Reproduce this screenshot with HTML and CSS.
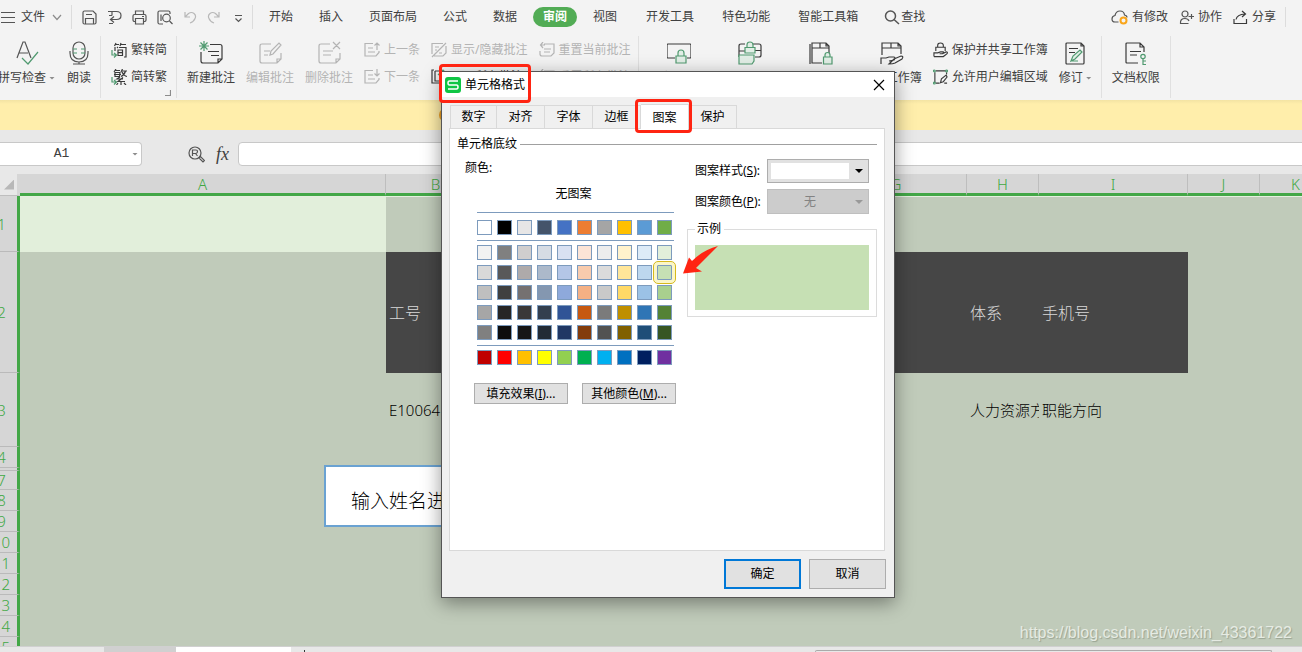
FILE: index.html
```html
<!DOCTYPE html>
<html lang="zh-CN">
<head>
<meta charset="utf-8">
<title>单元格格式</title>
<link rel="stylesheet" href="styles.css">
</head>
<body>
<div class="app">
  <header class="menubar">
    <div class="file-menu">
      <svg class="ico" width="16" height="16" viewBox="0 0 16 16"><path d="M1 3.500h14M1 8.500h14M1 13.500h14"/></svg>
      <button class="plain">文件</button>
      <svg class="ico pale" width="10" height="16" viewBox="0 0 10 16"><path d="M1 6l4 4.500 4-4.500"/></svg>
    </div>
    <div class="quick">
      <button class="plain" aria-label="保存"><svg class="ico" width="15" height="15" viewBox="0 0 15 15"><path d="M2.500 1h8.500l3 3v8.500q0 1.500-1.500 1.500h-10q-1.500 0-1.500-1.500v-10q0-1.500 1.500-1.500zM4 4.500h6M3.500 14V8.500h8V14"/></svg></button>
      <button class="plain" aria-label="输出"><svg class="ico" width="15" height="15" viewBox="0 0 15 15"><path d="M1 1.500h8.500q4.500 0 4.500 4t-4.500 4H4M5 1.500v4M2 5.500h3M7 6.500l-3.500 3 3.500 3M6 13.500H2"/></svg></button>
      <button class="plain" aria-label="打印"><svg class="ico" width="15" height="15" viewBox="0 0 15 15"><path d="M3.500 4.500V1h8v3.500M3.500 11.500H2q-1-.5-1-1.500V6q0-1.500 1.500-1.500h10Q14 4.500 14 6v4q0 1-1 1.500h-1.500M3.500 8.500h8V14h-8zM10 6.500h2"/></svg></button>
      <button class="plain" aria-label="打印预览"><svg class="ico" width="16" height="15" viewBox="0 0 16 15"><path d="M6 14H2.500Q1 14 1 12.500v-10Q1 1 2.500 1h9Q13 1 13 2.500V4M4 11V4.500M12.500 11l3 3"/><circle cx="9.500" cy="8" r="3.800"/></svg></button>
      <button class="plain" aria-label="撤销"><svg class="ico faint" width="14" height="15" viewBox="0 0 14 15"><path d="M2 2v5h5M2 7l3.500-3.500q3-2 5.500 0t1 5q-1 3-5 4.500"/></svg></button>
      <button class="plain" aria-label="恢复"><svg class="ico faint" width="14" height="15" viewBox="0 0 14 15"><path d="M12 2v5H7M12 7L8.500 3.500q-3-2-5.500 0t-1 5q1 3 5 4.500"/></svg></button>
      <button class="plain more" aria-label="更多"><svg class="ico" width="9" height="15" viewBox="0 0 9 15"><path d="M1 5.500h7M1.500 8.500l3 3 3-3"/></svg></button>
    </div>
    <nav class="tabs">
      <button class="plain">开始</button><button class="plain">插入</button><button class="plain">页面布局</button><button class="plain">公式</button><button class="plain">数据</button><button class="pill">审阅</button><button class="plain">视图</button>
    </nav>
    <nav class="tabs extra">
      <button class="plain">开发工具</button><button class="plain">特色功能</button><button class="plain">智能工具箱</button>
    </nav>
    <button class="plain find"><svg class="ico bold" width="16" height="16" viewBox="0 0 16 16"><circle cx="6.500" cy="7" r="5"/><path d="M10 10.500l5 4.500"/></svg>查找</button>
    <div class="account">
      <button class="plain"><svg class="ico" width="17" height="15" viewBox="0 0 17 15"><path d="M7.500 12H4Q1 12 1 9t3-3.500Q5 1 9 1t4.500 4Q16 5.500 16 7.500"/><circle class="orange" cx="12.500" cy="10.500" r="3"/></svg>有修改</button>
      <button class="plain"><svg class="ico" width="15" height="15" viewBox="0 0 15 15"><circle cx="6" cy="4" r="3"/><path d="M9.500 13.500H1.500Q1 8.500 6 8.500q3 0 4 2.500M9.500 6.500H15M12.500 4v5"/></svg>协作</button>
      <button class="plain"><svg class="ico dark" width="15" height="15" viewBox="0 0 15 15"><path d="M1 9v4.500h12.500V9M3 9.500Q4 4.500 12 4M9 1l3.500 3L9 7"/></svg>分享</button>
    </div>
  </header>

  <section class="ribbon">
    <div class="group first">
      <button class="big"><svg class="ico" width="24" height="24" viewBox="0 0 24 24"><path d="M2 17L8 1h2l6 16M4 12h9"/><path class="green" d="M7 17l6 6L23 11"/></svg><span class="drop">拼写检查</span></button>
      <button class="big"><svg class="ico" width="22" height="24" viewBox="0 0 22 24"><rect x="5" y="1" width="12" height="17" rx="6"/><path d="M2 10v2q0 9 9 9t9-9v-2M11 21v2M5 23h12"/><path class="green" d="M5 8h4M5 12h4M13 8h4M13 12h4"/></svg><span>朗读</span></button>
    </div>
    <div class="group convert">
      <div class="stack">
        <button class="small"><svg class="ico dark" width="16" height="16" viewBox="0 0 16 16"><path d="M5 1L3.500 4M4 2.500h4M10 1L9 4M9.500 2.500H15M4 5v4M6 5l1 1M8 5.500h7V15h-2M7 8h4.500v5.500H7zM7 10.700h4.500"/><path class="green" d="M1 8v5h4M3 11l2.500 2L3 15.500"/></svg>繁转简</button>
        <button class="small"><svg class="ico dark" width="16" height="16" viewBox="0 0 16 16"><path d="M5 0L3 3M4 1.500h5M4 3.500h5l-.5 4H4zM3 5.500h7M11.500 0L10 3M11 2h5M14.500 2q-1 4-4.500 5.500M11 3q2 4 5 4.500M9 8L6 10h6M12 8.500L7 12.500h7M10 12.500V16M7 14l-1.500 2M13 14l2 2"/><path class="green" d="M1 8v5h4M3 11l2.500 2L3 15.500"/></svg>简转繁</button>
      </div>
      <svg class="ico pale launcher" width="6" height="6" viewBox="0 0 6 6"><path d="M5.500 0v5.500H0"/></svg>
    </div>
    <div class="group comments">
      <button class="big"><svg class="ico dark" width="24" height="24" viewBox="0 0 24 24"><path d="M11 3.500h10q2 0 2 2V18l-4 4H4q-2 0-2-2v-9M23 18h-4v4M9 10.500h11M12 14.500h8"/><path class="green" d="M5 0v10M0 5h10M1.500 1.500l7 7M8.500 1.500l-7 7"/></svg><span>新建批注</span></button>
      <button class="big off" disabled><svg class="ico" width="24" height="24" viewBox="0 0 24 24"><path d="M13 3H4Q2 3 2 5v15q0 2 2 2h15l4-4V12M23 18h-4v4M6 10h6M6 14h4M12 14l1-4 8-8 2 2-8 9z"/></svg><span>编辑批注</span></button>
      <button class="big off" disabled><svg class="ico" width="24" height="24" viewBox="0 0 24 24"><path d="M13 3H4Q2 3 2 5v15q0 2 2 2h15l4-4V12M23 18h-4v4M6 10h10M6 14h8M16 1l7 7M23 1l-7 7"/></svg><span>删除批注</span></button>
      <div class="stack">
        <button class="small off" disabled><svg class="ico" width="16" height="16" viewBox="0 0 16 16"><path d="M9 1.500H1V14h11l3-3.500V9M4 6h5M4 10h7M13 8V1M10.500 3.500L13 1l2.500 2.500"/></svg>上一条</button>
        <button class="small off" disabled><svg class="ico" width="16" height="16" viewBox="0 0 16 16"><path d="M9 1.500H1V14h11l3-3.500V9M4 6h5M4 10h7M13 0v7M10.500 4.500L13 7l2.500-2.500"/></svg>下一条</button>
      </div>
      <div class="stack">
        <button class="small off" disabled><svg class="ico" width="16" height="16" viewBox="0 0 16 16"><path d="M12 1.500H1V12M3 14h9l3-3V4M15 1L1 15M4 5h4M4 8h2M8 11h3"/></svg>显示/隐藏批注</button>
        <button class="small"><svg class="ico dark" width="16" height="16" viewBox="0 0 16 16"><path d="M3 1H1v13h11M4 2h4M4 2v10h11V5"/><path class="green" d="M7 6l5-5 4 4"/></svg>显示所有批注</button>
      </div>
      <div class="stack">
        <button class="small off" disabled><svg class="ico" width="16" height="16" viewBox="0 0 16 16"><path d="M5 2h10v9l-3 3H3q-2 0-2-2V9M4 0L1.500 3 4 6M1.500 3H6M5 7h7M5 10h6"/></svg>重置当前批注</button>
        <button class="small off" disabled><svg class="ico" width="16" height="16" viewBox="0 0 16 16"><path d="M5 2h10v9l-3 3H3q-2 0-2-2V9M4 0L1.500 3 4 6M1.500 3H6M5 7h7M5 10h6"/></svg>重置所有批注</button>
      </div>
    </div>
    <div class="group protect">
      <button class="big"><svg class="ico dark" width="24" height="24" viewBox="0 0 24 24"><path d="M8 17H1q-1 0-1-1V4q0-1 1-1h22q1 0 1 1v12q0 1-1 1h-3"/><path class="green fill" d="M9 15h10v7H9zM11 15v-3q0-3 3-3t3 3v3"/></svg><span>锁定单元格</span></button>
      <button class="big"><svg class="ico dark" width="24" height="24" viewBox="0 0 24 24"><path d="M7 3H3Q1 3 1 5v11M1 10h6M12 3h9q2 0 2 2v9q0 2-2 2h-4M17 9.500h6"/><path class="green fill" d="M7 6.500h10V12H7zM9 6.500V4q0-3 3-3t3 3v2.500M1 14h15v6l-2 3H1z"/></svg><span>保护工作表</span></button>
      <button class="big"><svg class="ico dark" width="24" height="24" viewBox="0 0 24 24"><path d="M1 3v20M13 22H3V2h14l3 3v7M3 7h17M11 2v5M17 2v3h3"/><path class="green fill" d="M14.500 16H23v7h-8.500zM16 16v-2q0-2.500 2.500-2.500T21 14v2"/></svg><span>保护工作簿</span></button>
      <button class="big"><svg class="ico dark" width="24" height="24" viewBox="0 0 24 24"><path d="M2 14V2h16l3 3v8M2 7h19M11 2v5M18 2v3h3M1 23v-6h5l3-1h5q2 1 0 3l-5 1M14 18l7-3q3 0 1 3l-7 4q-2 1-6 1z"/></svg><span>共享工作簿</span></button>
      <div class="stack">
        <button class="small"><svg class="ico dark" width="15" height="16" viewBox="0 0 16 16"><path d="M3 9V5h10v4M5 5V3q0-2.500 3-2.500T11 3v2M1 15v-4h4l3-1h3q1 1-1 2H7M10 12l4-2q2 0 1 2l-4 3H1"/></svg>保护并共享工作簿</button>
        <button class="small"><svg class="ico dark" width="15" height="16" viewBox="0 0 16 16"><path d="M2 3v11M3 1.500h11M14.500 3v2M3 14.500h4M8 14l1-4 5-4 1 2-4 5zM12 14.500h3"/><circle class="green" cx="1.500" cy="1.500" r="1"/><circle class="green" cx="14.500" cy="1.500" r="1"/><circle class="green" cx="1.500" cy="14.500" r="1"/></svg>允许用户编辑区域</button>
      </div>
      <button class="big"><svg class="ico dark" width="22" height="24" viewBox="0 0 22 24"><path d="M3 2h14l3 3v17q0 1-1 1H3q-1 0-1-1V3q0-1 1-1zM17 2v3h3"/><path d="M5 7.500h9M5 11.500h6"/><path class="green fill" d="M7 20l2-5 7-6 2 2-7 7zM7 20h7"/></svg><span class="drop">修订</span></button>
    </div>
    <div class="group">
      <button class="big"><svg class="ico dark" width="24" height="24" viewBox="0 0 24 24"><path d="M14 22H3q-1 0-1-1V3q0-1 1-1h13l4 4v5M16 2v4h4M6 10.500h11M6 14h7"/><path class="green" d="M19 18v6M19 20h3M19 23.500h3"/><circle class="green" cx="19" cy="15.500" r="2.200"/></svg><span>文档权限</span></button>
    </div>
  </section>

  <div class="notice"><span class="notice-dot"></span></div>

  <section class="formula">
    <div class="namebox"><input type="text" value="A1" aria-label="名称框"><i class="caret"></i></div>
    <svg class="ico" width="17" height="17" viewBox="0 0 17 17"><circle cx="7" cy="7" r="6"/><path d="M4.500 10V4h3.500q1.500 0 1.500 1.500T8 7.500H5M7.500 7.500l2 2.500M11 12l1.500-1.500 4 4-1.500 1.500z"/></svg>
    <span class="fx">fx</span>
    <input class="formula-input" type="text" aria-label="编辑栏">
  </section>

  <main class="sheet">
    <table class="grid">
      <colgroup><col class="c-head"><col class="c-a"><col class="c-b"><col class="c-m"><col class="c-m"><col class="c-m"><col class="c-m"><col class="c-g"><col class="c-n"><col class="c-i"><col class="c-n"><col class="c-n"></colgroup>
      <thead><tr><th class="corner"><i></i></th><th>A</th><th>B</th><th>C</th><th>D</th><th>E</th><th>F</th><th>G</th><th>H</th><th>I</th><th>J</th><th>K</th></tr></thead>
      <tbody>
        <tr class="r1"><th>1</th><td class="active"></td><td colspan="10"></td></tr>
        <tr class="r2"><th>2</th><td></td><td class="ink">工号</td><td class="ink" colspan="5"></td><td class="ink">体系</td><td class="ink">手机号</td><td colspan="2"></td></tr>
        <tr class="r3"><th>3</th><td></td><td>E10064</td><td colspan="5"></td><td>人力资源方</td><td>职能方向</td><td colspan="2"></td></tr>
        <tr class="r4"><th>4</th><td colspan="11"></td></tr>
        <tr class="r5"><th></th><td colspan="11"></td></tr>
        <tr class="r7"><th>7</th><td colspan="11"></td></tr>
        <tr class="r4"><th>8</th><td colspan="11"></td></tr>
        <tr class="r4"><th>9</th><td colspan="11"></td></tr>
        <tr class="r4"><th>10</th><td colspan="11"></td></tr>
        <tr class="r4"><th>11</th><td colspan="11"></td></tr>
        <tr class="r4"><th>12</th><td colspan="11"></td></tr>
        <tr class="r4"><th>13</th><td colspan="11"></td></tr>
        <tr class="r4"><th>14</th><td colspan="11"></td></tr>
        <tr class="r4"><th>15</th><td colspan="11"></td></tr>
      </tbody>
    </table>
    <div class="textbox">输入姓名进</div>
    <div class="watermark">https://blog.csdn.net/weixin_43361722</div>
  </main>

  <footer class="sheetbar"><span class="sheet-tab idle"></span><span class="sheet-tab"></span><span class="plus"></span><span class="scroll"></span></footer>

  <div class="dialog" role="dialog" aria-labelledby="dlg-title">
    <div class="titlebar">
      <svg width="16" height="16" viewBox="0 0 16 16"><rect width="16" height="16" rx="3" fill="#0fc544"/><path d="M13 4H4.500Q3 4 3 6t1.500 2h7Q13 8 13 10t-1.500 2H3" fill="none" stroke="#fff" stroke-width="1.500"/></svg>
      <h1 id="dlg-title">单元格格式</h1>
      <button class="close" aria-label="关闭"><svg width="12" height="12" viewBox="0 0 12 12"><path d="M1 1l10 10M11 1L1 11" stroke="#000" stroke-width="1.200"/></svg></button>
    </div>
    <div class="dialog-body">
      <div class="dlg-tabs" role="tablist">
        <button role="tab">数字</button><button role="tab">对齐</button><button role="tab">字体</button><button role="tab">边框</button><button role="tab" aria-selected="true" class="on">图案</button><button role="tab">保护</button>
      </div>
      <div class="panel">
        <fieldset class="shade">
          <legend>单元格底纹</legend>
          <div class="colors">
            <div class="color-label">颜色:</div>
            <button class="none">无图案</button>
            <div class="palette" id="palette"></div>
            <div class="color-actions"><button class="btn">填充效果(<u>I</u>)...</button><button class="btn">其他颜色(<u>M</u>)...</button></div>
          </div>
          <div class="options">
            <div class="field"><label for="pstyle">图案样式(<u>S</u>):</label><span class="pick"><select id="pstyle"><option></option></select><svg width="8" height="4" viewBox="0 0 8 4"><path d="M0 0h8L4 4z"/></svg></span></div>
            <div class="field"><label for="pcolor">图案颜色(<u>P</u>):</label><span class="pick"><select id="pcolor" disabled><option>无</option></select><svg class="dim" width="8" height="4" viewBox="0 0 8 4"><path d="M0 0h8L4 4z"/></svg></span></div>
            <fieldset class="sample"><legend>示例</legend><div class="sample-fill"></div></fieldset>
          </div>
        </fieldset>
      </div>
      <div class="dlg-actions"><button class="btn ok">确定</button><button class="btn">取消</button></div>
    </div>
  </div>

  <div class="mark mark-title"></div>
  <div class="mark mark-tab"></div>
  <svg class="arrow" width="36" height="30" viewBox="0 0 36 30"><path d="M0 28.500L6 12.500 9 16Q20 5 35 1 25 11 13 23l6 3.500z" fill="#ff2412"/></svg>
</div>
<script src="palette.js"></script>
</body>
</html>
```

FILE: styles.css
```css
* { box-sizing: border-box; }
body { margin: 0; background: #e8e8e8; color: #404040; font: 12px/18px "Noto Sans", "Noto Sans CJK SC", sans-serif; }
button, input, select { font: inherit; color: inherit; margin: 0; padding: 0; }
button { background: none; border: 0; white-space: nowrap; }
.app { position: relative; display: flex; flex-direction: column; height: 100vh; overflow: hidden; }

.ico { flex: none; fill: none; stroke: #555; stroke-width: 1.2; }
.ico.dark { stroke: #3a3a3a; }
.ico.bold { stroke-width: 1.5; }
.ico.pale { stroke: #8c8c8c; }
.ico.faint { stroke: #b8b8b8; }
.ico .green { stroke: #509a70; }
.ico .fill { fill: #e2eee6; }
.ico .orange { stroke: #f9a51a; stroke-width: 2; }

.menubar { display: flex; align-items: center; height: 34px; background: #f3f3f3; white-space: nowrap; }
.menubar button { display: flex; align-items: center; flex: none; }
.file-menu { display: flex; align-items: center; gap: 5px; width: 72px; height: 24px; border-right: 1px solid #dcdcdc; }
.file-menu .pale { margin-left: 2px; }
.quick { display: flex; align-items: center; gap: 10px; width: 181px; height: 24px; padding-left: 10px; border-right: 1px solid #dcdcdc; }
.quick .more { margin-left: 3px; }
.tabs { display: flex; align-items: center; gap: 26px; padding-left: 16px; }
.tabs.extra { gap: 28px; padding-left: 29px; }
.tabs .pill { height: 20px; padding: 0 10px; margin: 0 -10px; border-radius: 10px; background: #52ac55; color: #fff; font-weight: 700; }
.find { gap: 1px; margin-left: 26px; }
.account { display: flex; align-items: center; gap: 11px; height: 20px; margin-left: auto; margin-right: 16px; padding-right: 9px; border-right: 1px solid #dcdcdc; }
.account button { gap: 4px; }

.ribbon { display: flex; height: 66px; padding: 2px 0; background: #f3f3f3; }
.group { display: flex; flex: none; gap: 11px; padding: 0 10px; border-right: 1px solid #e0e0e0; }
.group.first { gap: 12px; padding: 0 9px 0 0; margin-left: -2px; }
.group.convert { position: relative; padding-right: 9px; }
.group.comments { padding-right: 7px; }
.group.protect { padding-right: 9px; }
.big { display: flex; flex-direction: column; align-items: center; justify-content: space-between; height: 46px; margin-top: 5px; line-height: 18px; }
.stack { display: flex; flex-direction: column; justify-content: space-between; height: 45px; margin-top: 5px; }
.small { display: flex; align-items: center; gap: 4px; height: 18px; }
.off { color: #b4b4b4; }
.off .ico { stroke: #b4b4b4; }
.drop { display: flex; align-items: center; gap: 3px; }
.drop::after, .caret { content: ""; width: 6px; height: 3px; background: #8c8c8c; clip-path: polygon(0 0, 100% 0, 50% 100%); }
.launcher { position: absolute; right: 5px; bottom: 2px; }

.notice { height: 30px; padding: 8px 0 0 439px; background: linear-gradient(#f3e3a3, #ffeeab 4px); }
.notice-dot { display: block; width: 14px; height: 14px; border-radius: 7px; background: #f0a020; }

.formula { display: flex; align-items: center; height: 44px; padding-top: 4px; }
.namebox { display: flex; align-items: center; width: 142px; height: 24px; margin-right: 46px; padding-right: 3px; background: #fff; border: 1px solid #c8c8c8; border-left: 0; border-radius: 0 4px 4px 0; }
.namebox input { flex: 1; min-width: 0; padding-right: 9px; border: 0; background: none; text-align: center; font: 13px/18px "Liberation Mono", monospace; }
.fx { margin: 0 9px 0 11px; font: italic 18px/20px "Liberation Serif", serif; }
.formula-input { flex: 1; min-width: 0; height: 24px; margin-right: -4px; background: #fff; border: 1px solid #c8c8c8; border-radius: 4px; }

.sheet { position: relative; flex: 1; min-height: 0; overflow: hidden; background: #c0cbba; }
.grid { table-layout: fixed; width: 1344px; margin-left: -12px; border-collapse: separate; border-spacing: 0; color: #000; font-size: 15px; font-weight: 300; line-height: 18px; }
.c-head { width: 32px; } .c-a { width: 366px; } .c-b { width: 100px; } .c-m { width: 85px; }
.c-g { width: 141px; } .c-n { width: 72px; } .c-i { width: 149px; }
.grid th { padding: 0; background: #d6d6d6; color: #40a843; font-weight: 300; }
.grid thead th { height: 22px; border-bottom: 3px solid #43a747; border-right: 1px solid #bebebe; }
.grid thead .corner { background: #e8e8e8; border-bottom: 1px solid #bebebe; border-right-width: 3px; border-right-color: #d6d6d6; }
.corner i { display: block; width: 10px; height: 10px; margin-left: 16px; background: #b8b8b8; clip-path: polygon(100% 0, 100% 100%, 0 100%); }
.grid tbody th { padding-right: 2px; border-bottom: 1px solid #bababa; border-right: 3px solid #43a747; }
.grid td { padding: 0 0 0 3px; overflow: hidden; white-space: nowrap; }
.grid .active { background: #e2efdb; }
.r1 { height: 56px; } .r2 { height: 121px; } .r3 { height: 74px; }
.r1 td { border-top: 1px solid #e6f0e0; }
.r4 { height: 21px; } .r5 { height: 3px; line-height: 0; } .r7 { height: 18px; }
.grid .ink { background: #464646; color: #d8d8d8; font-size: 16px; }
.textbox { position: absolute; left: 324px; top: 291px; width: 200px; padding: 22px 25px 12px; background: #fff; border: 2px solid #6aa2d2; color: #000; font-size: 19px; font-weight: 300; line-height: 24px; }
.watermark { position: absolute; right: 10px; bottom: 3px; color: #e6ebe3; font: 16px/20px "Liberation Sans", Arial, sans-serif; text-shadow: 1px 1px 1px #98a392; }

.sheetbar { display: flex; flex: none; height: 6px; padding-left: 104px; border-top: 1px solid #d0d0d0; background: #e8e8e8; }
.sheet-tab { width: 115px; background: #fff; }
.sheet-tab.idle { width: 72px; background: #d0d0d0; }
.plus { width: 1px; margin: 3px 510px 0 13px; background: #333; }
.scroll { flex: 1; margin: 3px 30px 0 0; border: 1px solid #aaa; border-bottom: 0; border-radius: 4px 4px 0 0; }

.dialog { position: absolute; left: 441px; top: 71px; width: 454px; background: #f0f0f0; border: 1px solid #555; box-shadow: 0 5px 18px rgba(0, 0, 0, .4); color: #000; }
.titlebar { display: flex; align-items: center; height: 25px; padding: 0 9px 0 3px; background: #fff; }
.titlebar h1 { flex: 1; margin: 0 0 0 4px; font-size: 12px; font-weight: 400; }
.close { display: flex; }
.dialog-body { padding: 7px 8px 8px 7px; }
.dlg-tabs { display: flex; align-items: flex-end; height: 25px; padding-left: 1px; }
.dlg-tabs button { width: 48px; height: 24px; border: 1px solid #d9d9d9; border-left: 0; }
.dlg-tabs button:first-child { width: 47px; border-left: 1px solid #d9d9d9; }
.dlg-tabs .on { position: relative; height: 26px; margin-bottom: -1px; background: #fff; border-bottom: 0; }
.panel { min-height: 423px; margin: -1px 1px 0 0; padding: 6px 7px; background: #fff; border: 1px solid #d9d9d9; }
fieldset { min-width: 0; margin: 0; padding: 0; }
legend { padding: 0 3px 0 0; }
.shade { display: flex; justify-content: space-between; border: 0; border-top: 1px solid #a0a0a0; }
.color-label { margin: 6px 0 0 8px; }
.none { display: block; height: 24px; margin: 5px 0 6px 20px; width: 193px; }
.palette { display: grid; width: 197px; margin-left: 20px; border-top: 1px solid #7d9bbd; }
.palette-block { display: grid; grid-template-columns: repeat(10, 15px); gap: 5px; padding: 4px 0 5px; border-bottom: 1px solid #7d9bbd; }
.palette-block:first-child { padding-top: 7px; }
.palette-block:last-child { border-bottom: 0; }
.swatch { width: 15px; height: 15px; border: 1px solid #7d9bbd; }
.swatch.chosen { outline: 1px solid #d6b91c; outline-offset: 3px; border-radius: 1px; box-shadow: 0 0 0 3px #fbf6c8; }
.color-actions { display: flex; gap: 14px; margin: 13px 0 0 17px; }
.btn { height: 30px; width: 77px; background: #e1e1e1; border: 1px solid #adadad; }
.color-actions .btn { width: 94px; height: 21px; }
.ok { border: 2px solid #0078d7; }
.options { width: 190px; padding-top: 6px; }
.field { display: flex; align-items: center; justify-content: space-between; padding: 0 8px; margin-bottom: 6px; }
.pick { display: grid; width: 102px; align-items: center; }
.pick > * { grid-area: 1 / 1; }
.pick select { appearance: none; width: 100%; height: 24px; border: 1px solid #adadad; border-radius: 0; background: linear-gradient(#fff, #fff) 3px 3px / 78px 16px no-repeat #e1e1e1; }
.pick select:disabled { height: 25px; padding-left: 36px; border-color: #bfbfbf; background: #ccc; color: #838383; opacity: 1; }
.pick svg { justify-self: end; margin-right: 6px; pointer-events: none; }
.pick .dim { fill: #999; }
.sample { padding: 7px 7px 6px; border: 1px solid #dcdcdc; }
.sample legend { padding: 0 3px 0 2px; }
.sample-fill { height: 65px; background: #c6e0b4; }
.dlg-actions { display: flex; justify-content: flex-end; gap: 8px; padding-top: 8px; }

.mark { position: absolute; border: 3px solid #ff2412; border-radius: 4px; pointer-events: none; }
.mark-title { left: 439px; top: 64px; width: 92px; height: 39px; }
.mark-tab { left: 635px; top: 99px; width: 57px; height: 34px; }
.arrow { position: absolute; left: 683px; top: 245px; pointer-events: none; }
```

FILE: palette.js
```js
const blocks = [
  ["fff 000 e7e6e6 44546a 4472c4 ed7d31 a5a5a5 ffc000 5b9bd5 70ad47"],
  ["f2f2f2 808080 d0cece d6dce4 d9e1f2 fce4d6 ededed fff2cc ddebf7 e2efda",
   "d9d9d9 595959 aeaaaa acb9ca b4c6e7 f8cbad dbdbdb ffe699 bdd7ee c6e0b4",
   "bfbfbf 404040 757171 8497b0 8ea9db f4b084 c9c9c9 ffd966 9bc2e6 a9d08e",
   "a6a6a6 262626 3a3838 333f4f 305496 c65911 7b7b7b bf8f00 2f75b5 548235",
   "808080 0d0d0d 161616 222b35 203764 833c0c 525252 806000 1f4e78 375623"],
  ["c00000 f00 ffc000 ff0 92d050 00b050 00b0f0 0070c0 002060 7030a0"]
];
const palette = document.getElementById("palette");
for (const rows of blocks) {
  const block = document.createElement("div");
  block.className = "palette-block";
  for (const hex of rows.join(" ").split(" ")) {
    const b = document.createElement("button");
    b.className = hex === "c6e0b4" ? "swatch chosen" : "swatch";
    b.style.background = "#" + hex;
    b.setAttribute("aria-label", "#" + hex);
    block.append(b);
  }
  palette.append(block);
}
```
